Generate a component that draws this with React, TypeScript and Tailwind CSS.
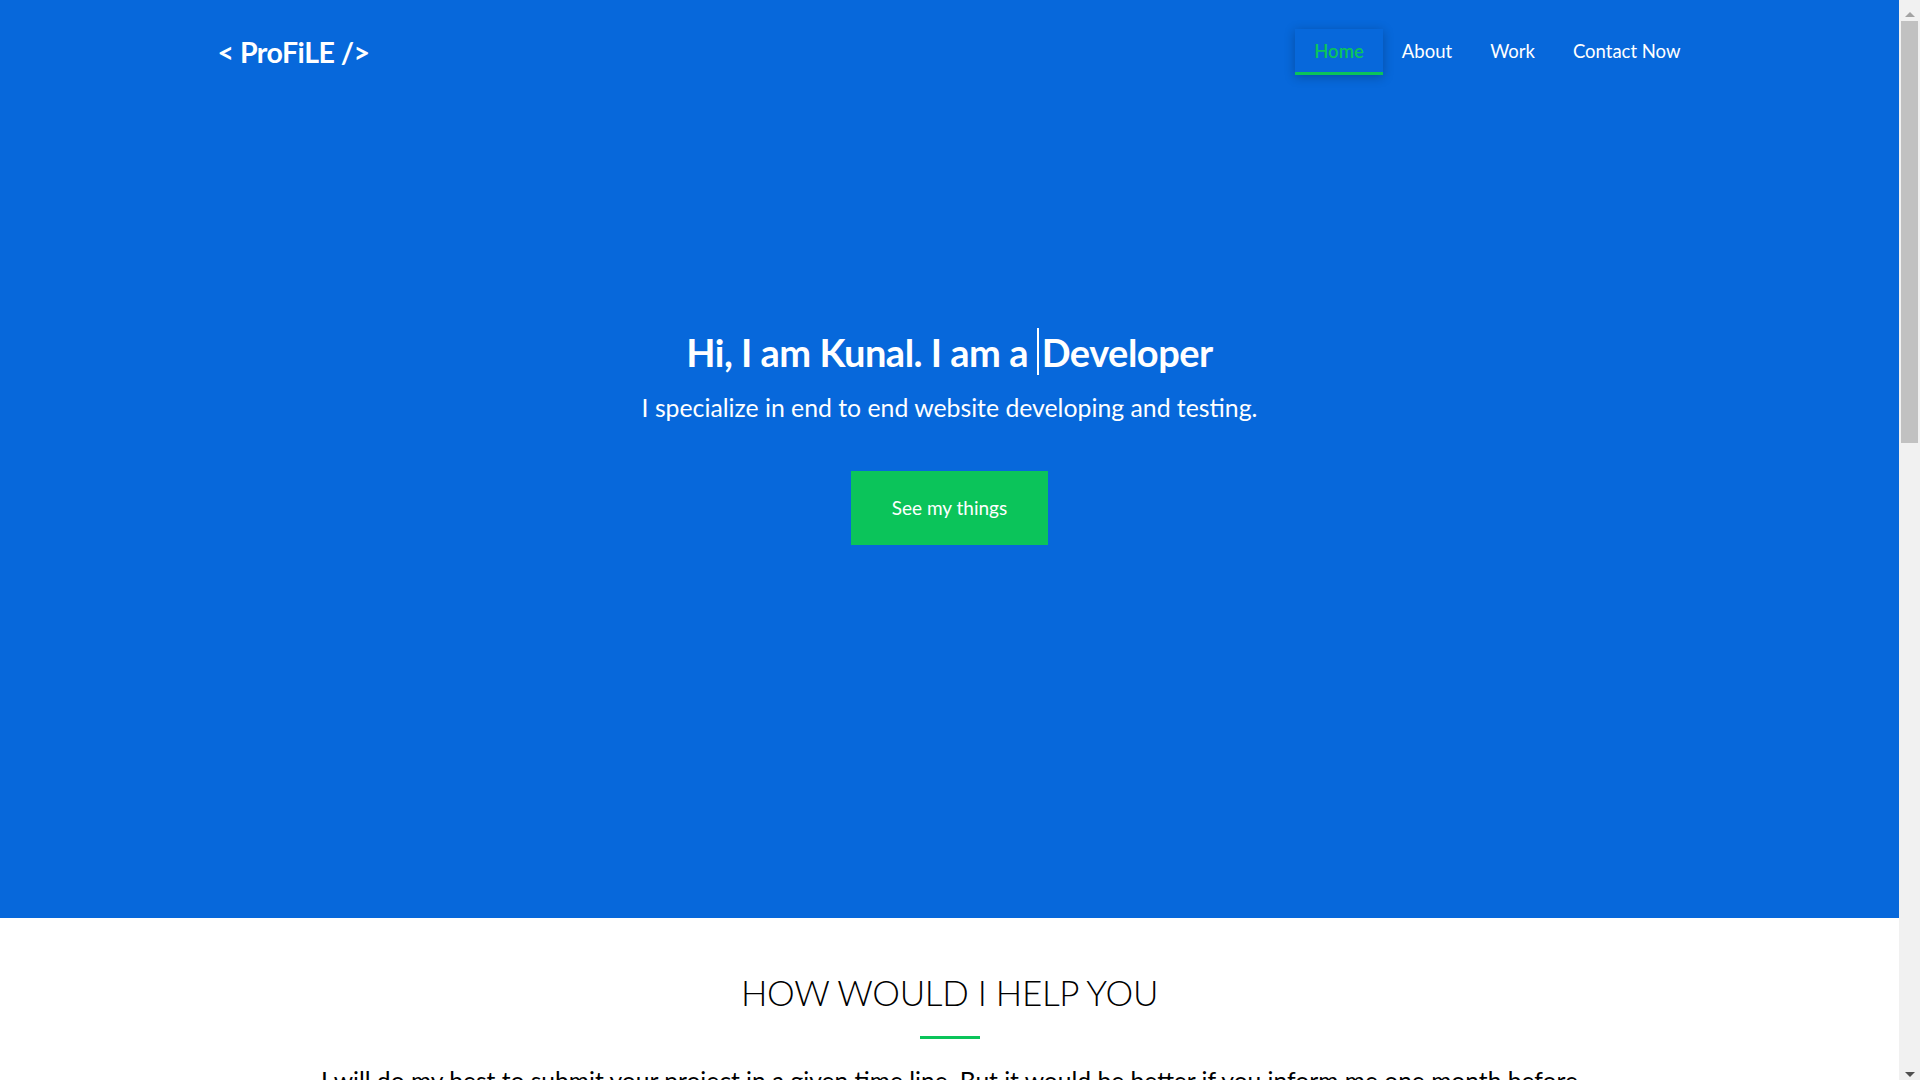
import { useEffect, useState } from "react";

const links = ["Home", "About", "Work", "Contact Now"];

const services = [
  {
    title: "Web Development",
    text: "Clean, responsive websites built from scratch with modern tools and a focus on speed.",
  },
  {
    title: "Testing",
    text: "Manual and automated testing so every page works the way it should on every device.",
  },
  {
    title: "Maintenance",
    text: "Regular updates, fixes and small improvements once your site is live.",
  },
];

function Nav() {
  const [active, setActive] = useState("Home");
  return (
    <nav className="mx-auto flex w-[1500px] items-center justify-between pt-[29px]">
      <a href="#" className="px-[18px] text-[28.5px] font-bold tracking-[-0.5px] text-white">
        &lt; ProFiLE /&gt;
      </a>
      <ul className="flex items-center">
        {links.map((l) => (
          <li key={l}>
            <button
              onClick={() => setActive(l)}
              className={`flex h-[46px] items-center px-[19px] text-[18.5px] ${
                active === l
                  ? "border-b-[3px] border-[#0bc45a] pt-[3px] font-semibold text-[#0bc45a] shadow-[0_2px_10px_rgba(0,0,0,0.25)]"
                  : "text-white"
              }`}
            >
              {l}
            </button>
          </li>
        ))}
      </ul>
    </nav>
  );
}

// typed-text caret
function Cursor() {
  const [on, setOn] = useState(true);
  useEffect(() => {
    const t = setInterval(() => setOn((v) => !v), 600);
    return () => clearInterval(t);
  }, []);
  return (
    <span
      className={`mr-[3px] inline-block h-[47px] w-[2px] translate-y-[8px] bg-white ${
        on ? "opacity-100" : "opacity-100"
      }`}
    />
  );
}

function Scrollbar() {
  return (
    <aside className="flex w-[21px] shrink-0 flex-col items-center bg-[#f1f1f1]">
      <div className="flex h-[17px] items-end justify-center">
        <span className="h-0 w-0 border-x-[5px] border-b-[5px] border-x-transparent border-b-[#a3a3a3]" />
      </div>
      <div className="mt-[4px] h-[422px] w-[17px] bg-[#c1c1c1]" />
      <div className="flex-1" />
      <div className="flex h-[17px] items-start justify-center pt-[9px]">
        <span className="h-0 w-0 border-x-[5px] border-t-[5px] border-x-transparent border-t-[#505050]" />
      </div>
    </aside>
  );
}

export default function App() {
  return (
    <div className="flex h-screen overflow-hidden font-['Lato',sans-serif]">
      <main className="min-w-0 flex-1 overflow-hidden">
        <section className="h-[918px] bg-[#0768db]">
          <Nav />
          <div className="flex flex-col items-center pt-[245px] text-white">
            <h1 className="text-[38px] leading-[48px] font-bold tracking-[-0.5px]">
              Hi, I am Kunal. I am a <Cursor />Developer
            </h1>
            <p className="mt-[15px] text-[24.8px] leading-[34px]">
              I specialize in end to end website developing and testing.
            </p>
            <a
              href="#work"
              className="mt-[46px] flex h-[74px] w-[197px] items-center justify-center bg-[#0bc45a] text-[19px] text-white"
            >
              See my things
            </a>
          </div>
        </section>

        <section className="bg-white pb-[200px]">
          <div className="mx-auto flex flex-col items-center pt-[52px]">
            <h2 className="text-[35px] leading-[44px] font-light tracking-[-0.3px] text-black">
              HOW WOULD I HELP YOU
            </h2>
            <div className="mt-[22px] h-[3px] w-[60px] bg-[#0bc45a]" />
            <p className="mt-[24px] text-center text-[24.6px] leading-[36px] text-black">
              I will do my best to submit your project in a given time line. But it would be better if you inform me one month before
              <br />
              so that I can plan the work and keep you updated at every step.
            </p>
            <div className="mt-[80px] grid w-[1300px] grid-cols-3 gap-[40px]">
              {services.map((s) => (
                <div key={s.title} className="flex flex-col items-center border border-gray-200 p-[40px] text-center">
                  <div className="h-[80px] w-[80px] rounded-full bg-[#0768db]" />
                  <h3 className="mt-[24px] text-[24px] font-bold">{s.title}</h3>
                  <p className="mt-[12px] text-[18px] text-gray-600">{s.text}</p>
                </div>
              ))}
            </div>
          </div>
        </section>
      </main>
      <Scrollbar />
    </div>
  );
}
